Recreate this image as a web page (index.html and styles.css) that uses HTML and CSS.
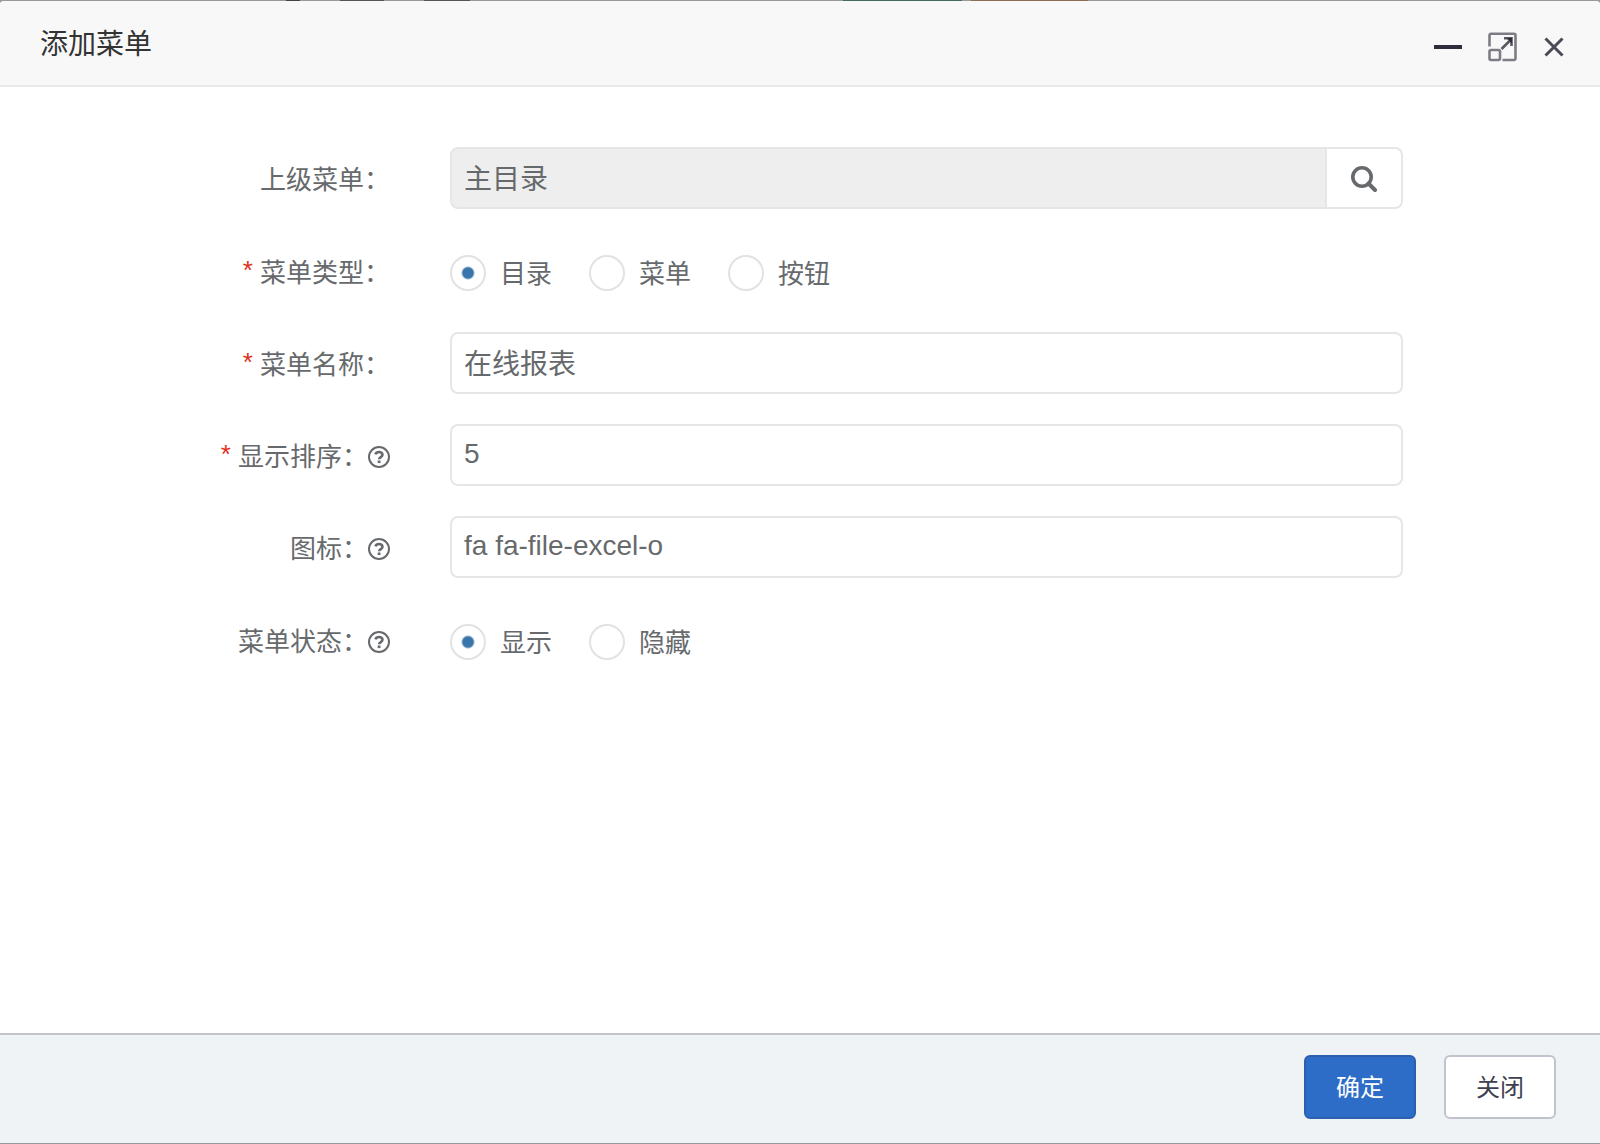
FILE: index.html
```html
<!DOCTYPE html>
<html lang="zh-CN">
<head>
<meta charset="utf-8">
<meta name="viewport" content="width=device-width, initial-scale=1">
<title>添加菜单</title>
<link rel="stylesheet" href="styles.css">
</head>
<body>
<div class="backdrop">
<div class="dialog" role="dialog" aria-labelledby="dialog-title">
  <header class="dialog-header">
    <h1 class="dialog-title" id="dialog-title">添加菜单</h1>
    <div class="window-actions">
      <button class="window-button" type="button" aria-label="最小化">
        <svg width="28" height="30" viewBox="0 0 28 30"><path d="M0 13h28v4H0z" fill="#2e2d3c"/></svg>
      </button>
      <button class="window-button" type="button" aria-label="最大化">
        <svg width="30" height="30" viewBox="0 0 30 30" fill="none" stroke="#7d7c85" stroke-width="2.6">
          <path d="M1.500 14.500V3.200a1.500 1.500 0 0 1 1.500-1.500H26a1.500 1.500 0 0 1 1.500 1.500V26.500a1.500 1.500 0 0 1-1.500 1.500H14.500"/>
          <rect x="1.500" y="18" width="10.500" height="10" rx="1.500"/>
          <path d="M13.500 17L22 8.500" stroke="#5a5964"/>
          <path d="M16 6.300H23.500v7.700" stroke="#5a5964"/>
          <path d="M18.500 6H24v5.500z" fill="#2e2d3c" stroke="none"/>
        </svg>
      </button>
      <button class="window-button" type="button" aria-label="关闭窗口">
        <svg width="20" height="30" viewBox="0 0 20 30"><path d="M1.500 6.500l17 17M18.500 6.500l-17 17" fill="none" stroke="#4a4956" stroke-width="3"/></svg>
      </button>
    </div>
  </header>

  <form class="menu-form" id="menu-form">
    <div class="form-row">
      <label class="form-label" for="parent">上级菜单：</label>
      <div class="form-field input-group">
        <input class="text-input" id="parent" type="text" value="主目录" readonly>
        <button class="search-button" type="button" aria-label="选择上级菜单">
          <svg width="26" height="26" viewBox="0 0 26 26" fill="none" stroke="#676a6c"><circle cx="11" cy="11" r="9.200" stroke-width="3.600"/><path d="M17.500 17.500L24 24" stroke-width="4" stroke-linecap="round"/></svg>
        </button>
      </div>
    </div>

    <div class="form-row" role="radiogroup" aria-labelledby="type-label">
      <div class="form-label" id="type-label"><span class="required">*</span>菜单类型：</div>
      <div class="form-field radio-list">
        <label class="radio-item"><input class="radio" type="radio" name="type" checked><span class="radio-text">目录</span></label>
        <label class="radio-item"><input class="radio" type="radio" name="type"><span class="radio-text">菜单</span></label>
        <label class="radio-item"><input class="radio" type="radio" name="type"><span class="radio-text">按钮</span></label>
      </div>
    </div>

    <div class="form-row">
      <label class="form-label" for="name"><span class="required">*</span>菜单名称：</label>
      <div class="form-field"><input class="text-input" id="name" type="text" value="在线报表"></div>
    </div>

    <div class="form-row">
      <label class="form-label" for="order"><span class="required">*</span>显示排序：<svg class="help" viewBox="0 0 22 22"><use href="#help-icon"/></svg></label>
      <div class="form-field"><input class="text-input" id="order" type="text" value="5"></div>
    </div>

    <div class="form-row">
      <label class="form-label" for="icon">图标：<svg class="help" viewBox="0 0 22 22"><use href="#help-icon"/></svg></label>
      <div class="form-field"><input class="text-input" id="icon" type="text" value="fa fa-file-excel-o"></div>
    </div>

    <div class="form-row" role="radiogroup" aria-labelledby="status-label">
      <div class="form-label" id="status-label">菜单状态：<svg class="help" viewBox="0 0 22 22"><use href="#help-icon"/></svg></div>
      <div class="form-field radio-list">
        <label class="radio-item"><input class="radio" type="radio" name="status" checked><span class="radio-text">显示</span></label>
        <label class="radio-item"><input class="radio" type="radio" name="status"><span class="radio-text">隐藏</span></label>
      </div>
    </div>
  </form>

  <footer class="dialog-footer">
    <button class="button button-primary" type="submit" form="menu-form">确定</button>
    <button class="button" type="button">关闭</button>
  </footer>
</div>
</div>

<svg class="symbols" aria-hidden="true">
  <symbol id="help-icon" viewBox="0 0 22 22">
    <circle cx="11" cy="11" r="10" fill="none" stroke="#676a6c" stroke-width="2"/>
    <path d="M7.400 8.400C8 6.800 9.300 6 11 6c2 0 3.500 1.200 3.500 2.800 0 2.300-3.300 2.200-3.300 4.400" fill="none" stroke="#676a6c" stroke-width="2.600"/>
    <path d="M9.700 14.500h2.800v2.600H9.700z" fill="#676a6c"/>
  </symbol>
</svg>
</body>
</html>
```
FILE: styles.css
```css
*,
*::before,
*::after {
  box-sizing: border-box;
}

body {
  margin: 0;
  color: #676a6c;
  font: 26px/36px "Liberation Sans", "Noto Sans CJK SC", sans-serif;
}

button,
input {
  margin: 0;
  font-family: inherit;
}

/* A sliver of the dimmed page shows above and below the dialog. */
.backdrop {
  display: flex;
  min-height: 100vh;
  padding: 1px 0;
  background:
    linear-gradient(90deg, transparent 286px, #444 286px 300px, transparent 300px 340px, #555 340px 384px, transparent 384px 424px, #555 424px 470px, transparent 470px) top / 100% 1px no-repeat,
    linear-gradient(90deg, transparent 843px, #456a5e 843px 962px, transparent 962px 971px, #8d6e54 971px 1088px, transparent 1088px) top / 100% 1px no-repeat,
    #999;
}

.dialog {
  display: flex;
  flex: 1;
  flex-direction: column;
  border-radius: 4px 4px 0 0;
  background: #fff;
}

.dialog-header {
  display: flex;
  align-items: center;
  justify-content: space-between;
  height: 86px;
  padding: 0 36px 0 40px;
  border-bottom: 2px solid #eaeaea;
  border-radius: 4px 4px 0 0;
  background: #f8f8f8;
}

.dialog-title {
  margin: 0;
  padding-top: 4px;
  color: #333;
  font-size: 28px;
  font-weight: 400;
}

.window-actions {
  display: flex;
  gap: 26px;
  padding-top: 8px;
}

.window-button {
  display: flex;
  padding: 0;
  border: 0;
  background: none;
}

.menu-form {
  display: grid;
  flex: 1;
  align-content: start;
  row-gap: 30px;
  padding: 60px 40px;
}

.form-row {
  display: grid;
  grid-template-columns: 3fr 8fr 1fr;
}

.form-label {
  display: flex;
  align-items: center;
  justify-content: flex-end;
  padding: 4px 30px 0 0;
}

.required {
  margin-right: 7px;
  padding-bottom: 6px;
  color: #e02f1c;
}

.help {
  width: 22px;
  height: 22px;
}

.form-field {
  display: flex;
  min-width: 0;
  padding: 0 30px;
}

.text-input {
  flex: 1;
  min-width: 0;
  height: 62px;
  padding: 0 12px 2px;
  border: 2px solid #e5e6e7;
  border-radius: 8px;
  background: #fff;
  color: #676a6c;
  font-size: 28px;
}

.input-group .text-input {
  border-radius: 8px 0 0 8px;
  background: #eee;
}

.search-button {
  display: flex;
  align-items: center;
  justify-content: center;
  width: 76px;
  padding: 2px 0 0;
  border: 2px solid #e5e6e7;
  border-left: 0;
  border-radius: 0 8px 8px 0;
  background: #fff;
}

.radio-list {
  align-items: center;
  gap: 37px;
  height: 63px;
  padding-top: 5px;
}

.radio-item {
  display: flex;
  align-items: center;
  gap: 14px;
}

.radio-text {
  padding-top: 2px;
}

.radio {
  width: 36px;
  height: 36px;
  border: 2px solid #e2e2e2;
  border-radius: 50%;
  background: #fff;
  appearance: none;
}

.radio:checked {
  background: radial-gradient(circle, #3875aa 5px, #fff 7px);
}

.dialog-footer {
  display: flex;
  justify-content: flex-end;
  gap: 28px;
  padding: 20px 44px 24px;
  border-top: 2px solid #c2c3c7;
  background: #eff3f6;
}

.button {
  width: 112px;
  height: 64px;
  padding: 0 0 4px;
  border: 2px solid #c2c2cc;
  border-radius: 6px;
  background: #fff;
  color: #3e3f50;
  font-size: 24px;
}

.button-primary {
  border-color: #2c60ae;
  background: #2d6dc8;
  color: #fff;
}

.symbols {
  position: absolute;
  width: 0;
  height: 0;
}
```
